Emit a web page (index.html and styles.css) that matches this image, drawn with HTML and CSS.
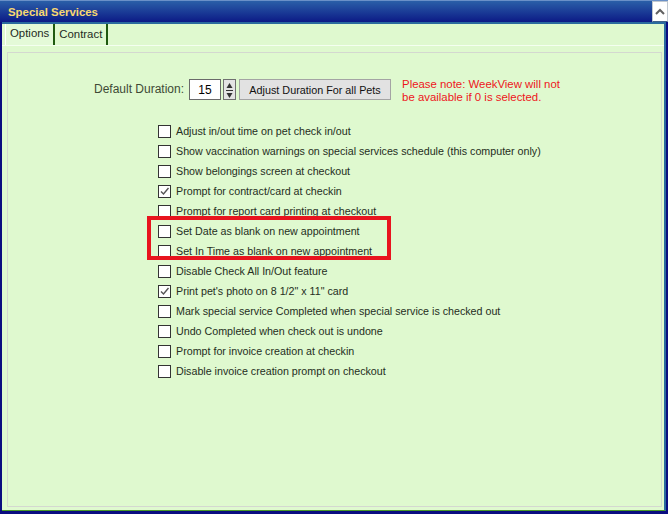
FILE: index.html
```html
<!DOCTYPE html>
<html lang="en">
<head>
    <meta charset="UTF-8">
    <title>Special Services</title>
    <link rel="stylesheet" href="styles.css">
</head>
<body>
    <div class="window">
        <div class="titlebar">
            <span class="title">Special Services</span>
            <button class="collapse">
                <svg width="10" height="7" viewBox="0 0 10 7"><path d="M1 6 L5 2 L9 6" fill="none" stroke="#606060" stroke-width="2"/></svg>
            </button>
        </div>
        <div class="frame">
            <div class="tabs">
                <div class="tab active">Options</div>
                <div class="tab">Contract</div>
            </div>
            <div class="tab-body">
                <div class="panel">
                    <div class="duration-row">
                        <span class="label">Default Duration:</span>
                        <input class="num" type="text" value="15">
                        <span class="spin">
                            <svg width="11" height="21" viewBox="0 0 11 21">
                                <path d="M5.5 3 L8.5 8 L2.5 8 Z" fill="#333"/>
                                <path d="M2 10.5 H9" stroke="#333" stroke-width="1"/>
                                <path d="M5.5 18 L8.5 13 L2.5 13 Z" fill="#333"/>
                            </svg>
                        </span>
                        <button class="btn">Adjust Duration For all Pets</button>
                        <p class="note">Please note: WeekView will not<br>be available if 0 is selected.</p>
                    </div>
                    <div class="options">
                        <label class="opt"><span class="box"></span>Adjust in/out time on pet check in/out</label>
                        <label class="opt"><span class="box"></span>Show vaccination warnings on special services schedule (this computer only)</label>
                        <label class="opt"><span class="box"></span>Show belongings screen at checkout</label>
                        <label class="opt"><span class="box checked"><svg width="11" height="11" viewBox="0 0 11 11"><path d="M2 5.5 L4.5 8 L9.5 2" fill="none" stroke="#555" stroke-width="1.4"/></svg></span>Prompt for contract/card at checkin</label>
                        <label class="opt"><span class="box"></span>Prompt for report card printing at checkout</label>
                        <label class="opt"><span class="box"></span>Set Date as blank on new appointment</label>
                        <label class="opt"><span class="box"></span>Set In Time as blank on new appointment</label>
                        <label class="opt"><span class="box"></span>Disable Check All In/Out feature</label>
                        <label class="opt"><span class="box checked"><svg width="11" height="11" viewBox="0 0 11 11"><path d="M2 5.5 L4.5 8 L9.5 2" fill="none" stroke="#555" stroke-width="1.4"/></svg></span>Print pet's photo on 8 1/2" x 11" card</label>
                        <label class="opt"><span class="box"></span>Mark special service Completed when special service is checked out</label>
                        <label class="opt"><span class="box"></span>Undo Completed when check out is undone</label>
                        <label class="opt"><span class="box"></span>Prompt for invoice creation at checkin</label>
                        <label class="opt"><span class="box"></span>Disable invoice creation prompt on checkout</label>
                        <div class="highlight"></div>
                    </div>
                </div>
            </div>
        </div>
    </div>
</body>
</html>
```

FILE: styles.css
```css
body {
    margin: 0;
    padding: 0;
    background-color: #0a0c80;
    font-family: 'Liberation Sans', Arial, sans-serif;
    font-size: 11px;
}
.window {
    width: 668px;
    height: 514px;
    display: flex;
    flex-direction: column;
}
.titlebar {
    height: 22px;
    display: flex;
    align-items: center;
    justify-content: space-between;
    border-top: 1px solid #6a90c8;
    box-sizing: border-box;
    background-image: linear-gradient(180deg, #2a5fa8, #0c1a86);
}
.title {
    color: #f8d870;
    font-weight: bold;
    font-size: 11.4px;
    padding-left: 8px;
}
.collapse {
    width: 16px;
    height: 21px;
    margin: 0;
    padding: 0;
    border: 1px solid #c0c8d0;
    border-bottom-color: #40608a;
    background-color: #ffffff;
    display: flex;
    align-items: center;
    justify-content: center;
}
.frame {
    flex: 1;
    display: flex;
    flex-direction: column;
    margin: 0 2px 3px 2px;
    border-top: 2px solid #2a6a9e;
    border-right: 2px solid #2a6a9e;
    border-bottom: 1px solid #4a9a28;
    background-color: #dff9cf;
}
.tabs {
    display: flex;
    height: 21px;
    padding-left: 3px;
}
.tab {
    padding: 4px 4px 0 4px;
    color: #1e2a1e;
    font-size: 11.4px;
    border-right: 2px solid #1f5a10;
}
.tab.active {
    border-left: 1px solid #ffffff;
    background-color: #e4fad8;
    padding-top: 3px;
}
.tab-body {
    flex: 1;
    border-top: 1px solid #f4fff0;
    padding: 6px 2px 3px 5px;
    display: flex;
}
.panel {
    flex: 1;
    border: 1px solid #d4d8d0;
    padding: 26px 0 0 86px;
}
.duration-row {
    display: flex;
    align-items: flex-start;
}
.label {
    color: #3e4a36;
    font-size: 12px;
    line-height: 21px;
    margin-right: 5px;
}
.num {
    width: 32px;
    height: 21px;
    box-sizing: border-box;
    border: 1px solid #6a6a6a;
    background-color: #ffffff;
    font-family: 'Liberation Sans', Arial, sans-serif;
    font-size: 12px;
    text-align: center;
    padding: 0;
    margin: 0;
}
.spin {
    display: flex;
    width: 13px;
    height: 21px;
    box-sizing: border-box;
    border: 1px solid #707070;
    background-color: #e4e4e4;
    margin-left: 2px;
}
.btn {
    width: 152px;
    height: 21px;
    margin: 0 0 0 3px;
    padding: 0;
    border: 1px solid #a4a4a4;
    background-color: #e2e2e2;
    font-family: 'Liberation Sans', Arial, sans-serif;
    font-size: 10.8px;
    color: #111111;
}
.note {
    margin: -1px 0 0 11px;
    color: #ee1520;
    font-size: 11.4px;
    line-height: 13px;
}
.options {
    position: relative;
    margin: 17px 0 0 64px;
    display: flex;
    flex-direction: column;
}
.opt {
    display: flex;
    align-items: center;
    height: 20px;
    color: #252e22;
    font-size: 10.7px;
}
.box {
    width: 13px;
    height: 13px;
    box-sizing: border-box;
    border: 1px solid #333333;
    background-color: #ffffff;
    margin-right: 5px;
    display: flex;
    align-items: center;
    justify-content: center;
}
.highlight {
    position: absolute;
    left: -11px;
    top: 95px;
    width: 236px;
    height: 36px;
    border: 4px solid #e8141e;
}
```
